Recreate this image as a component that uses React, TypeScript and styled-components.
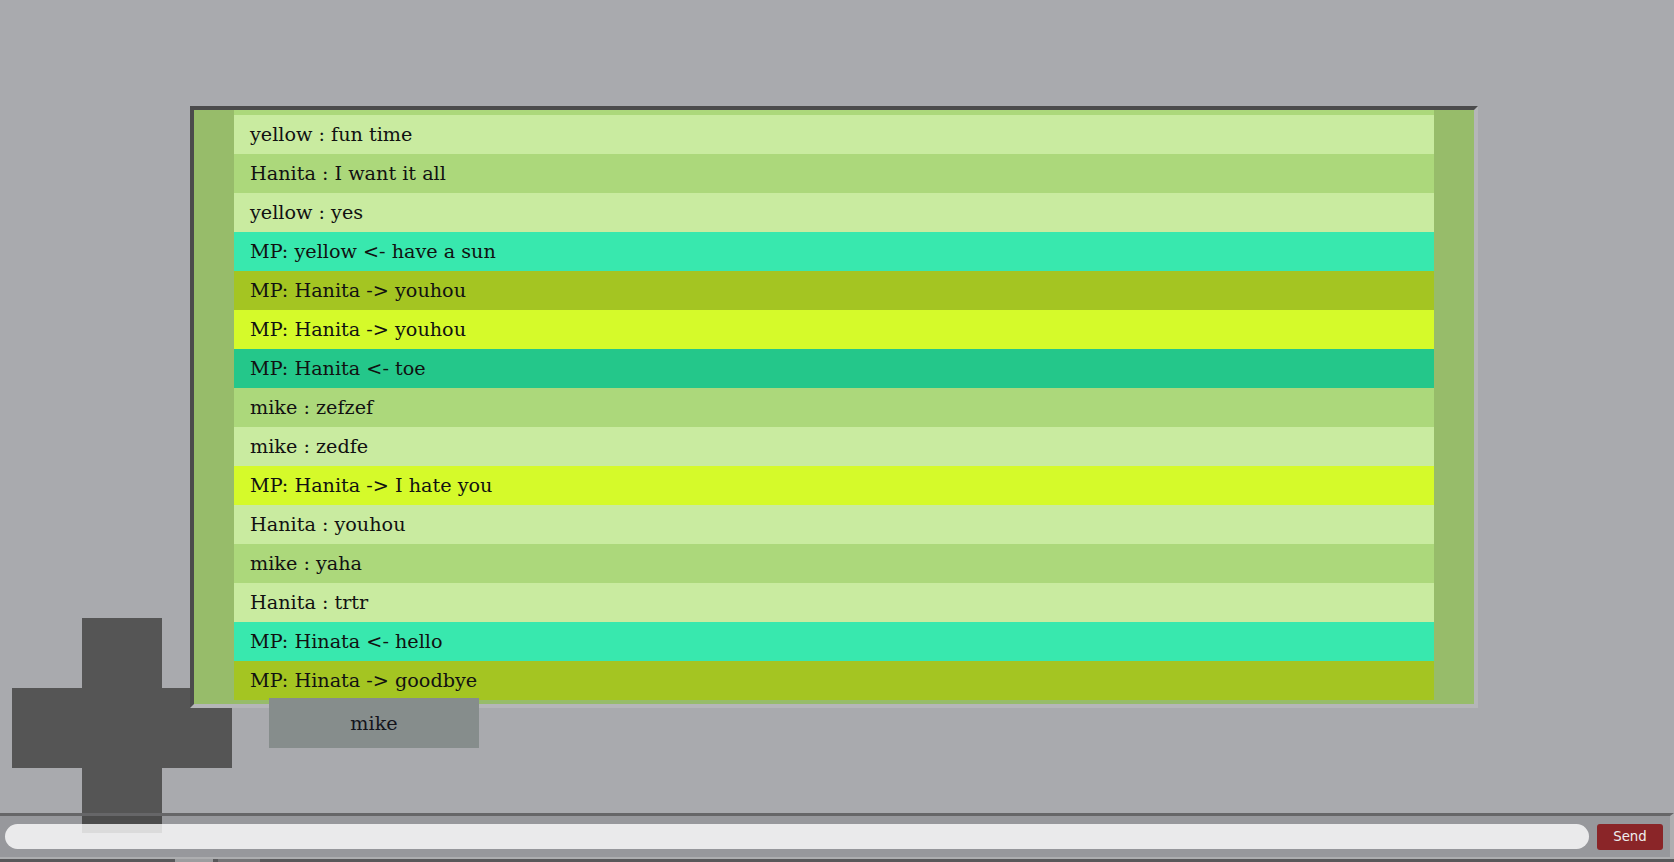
import React from "react";
import styled, { createGlobalStyle } from "styled-components";

interface Message {
  text: string;
  kind: "light" | "mid" | "teal" | "olive" | "lime" | "green";
}

const ROW_COLORS: Record<Message["kind"], string> = {
  light: "#c9eba0",
  mid: "#acd87b",
  teal: "#38e8ae",
  olive: "#a4c522",
  lime: "#d5fa2a",
  green: "#24c78a",
};

const messages: Message[] = [
  { text: "yellow : fun time", kind: "light" },
  { text: "Hanita : I want it all", kind: "mid" },
  { text: "yellow : yes", kind: "light" },
  { text: "MP: yellow <- have a sun", kind: "teal" },
  { text: "MP: Hanita -> youhou", kind: "olive" },
  { text: "MP: Hanita -> youhou", kind: "lime" },
  { text: "MP: Hanita <- toe", kind: "green" },
  { text: "mike : zefzef", kind: "mid" },
  { text: "mike : zedfe", kind: "light" },
  { text: "MP: Hanita -> I hate you", kind: "lime" },
  { text: "Hanita : youhou", kind: "light" },
  { text: "mike : yaha", kind: "mid" },
  { text: "Hanita : trtr", kind: "light" },
  { text: "MP: Hinata <- hello", kind: "teal" },
  { text: "MP: Hinata -> goodbye", kind: "olive" },
];

const GlobalStyle = createGlobalStyle`
  html, body {
    margin: 0;
    padding: 0;
    height: 100%;
    overflow: hidden;
    background: #a9aaae;
  }
  #root {
    height: 100%;
  }
`;

const Page = styled.div`
  position: relative;
  height: 100vh;
  display: flex;
  flex-direction: column;
  overflow: hidden;
  font-family: "DejaVu Serif", serif;
`;

const Stage = styled.main`
  position: relative;
  z-index: 1;
  padding: 106px 0 0 190px;
`;

const Screen = styled.section`
  width: 1288px;
  box-sizing: border-box;
  display: grid;
  grid-template-columns: 40px 1fr 40px;
  padding-bottom: 4px;
  background: #97bc6a;
  border: 4px solid;
  border-color: #4b4b4c #b5b6b8 #b5b6b8 #4b4b4c;
`;

// scrolled to the bottom: the rest of an older row peeks out on top
const ChatList = styled.ul`
  grid-column: 2;
  height: 590px;
  margin: 0;
  padding: 0;
  list-style: none;
  overflow: hidden;
  display: flex;
  flex-direction: column;
  justify-content: flex-end;
  background: #acd87b;
`;

const ChatRow = styled.li<{ $bg: string }>`
  flex-shrink: 0;
  height: 39px;
  box-sizing: border-box;
  display: flex;
  align-items: center;
  padding: 0 0 1px 16px;
  background: ${(p) => p.$bg};
  color: #111;
  font-size: 19.2px;
`;

const UserTab = styled.div`
  position: relative;
  margin: -10px 0 0 79px;
  width: 210px;
  height: 50px;
  display: flex;
  align-items: center;
  justify-content: center;
  background: #868d8c;
  color: #14141c;
  font-size: 19.2px;
`;

const DPad = styled.svg`
  position: absolute;
  left: 12px;
  top: 618px;
  z-index: 0;
`;

const InputBar = styled.form`
  position: relative;
  z-index: 1;
  margin-top: auto;
  height: 41px;
  display: flex;
  align-items: center;
  gap: 8px;
  padding: 0 7px 0 5px;
  background: rgba(0, 0, 0, 0.1);
  border-top: 3px solid #666668;
  border-right: 4px solid #adaeb0;
  border-bottom: 2px solid #adaeb0;
`;

const MessageInput = styled.input`
  flex: 1;
  height: 25px;
  box-sizing: border-box;
  border: none;
  outline: none;
  border-radius: 13px;
  padding: 0 12px;
  background: rgba(255, 255, 255, 0.8);
  font-family: "DejaVu Sans", sans-serif;
  font-size: 13px;
`;

const SendButton = styled.button`
  width: 66px;
  height: 26px;
  border: none;
  border-radius: 3px;
  background: #8a2528;
  color: #eee;
  font-family: "DejaVu Sans", sans-serif;
  font-size: 13.3px;
  cursor: pointer;
`;

const Footer = styled.div`
  height: 3px;
  display: flex;
  background: #58585a;
`;

const FooterKey = styled.span<{ $w: number; $tone?: string }>`
  width: ${(p) => p.$w}px;
  background: ${(p) => p.$tone ?? "#58585a"};
`;

const App: React.FC = () => {
  return (
    <>
      <GlobalStyle />
      <Page>
        <DPad width="220" height="215" viewBox="0 0 220 215">
          <rect x="70" y="0" width="80" height="215" fill="#555555" />
          <rect x="0" y="70" width="220" height="80" fill="#555555" />
        </DPad>
        <Stage>
          <Screen>
            <ChatList>
              {messages.map((m, i) => (
                <ChatRow key={i} $bg={ROW_COLORS[m.kind]}>
                  {m.text}
                </ChatRow>
              ))}
            </ChatList>
          </Screen>
          <UserTab>mike</UserTab>
        </Stage>
        <InputBar onSubmit={(e) => e.preventDefault()}>
          <MessageInput type="text" />
          <SendButton type="submit">Send</SendButton>
        </InputBar>
        <Footer>
          <FooterKey $w={175} />
          <FooterKey $w={38} $tone="#9c9d9f" />
          <FooterKey $w={5} />
          <FooterKey $w={42} $tone="#747476" />
        </Footer>
      </Page>
    </>
  );
};

export default App;
